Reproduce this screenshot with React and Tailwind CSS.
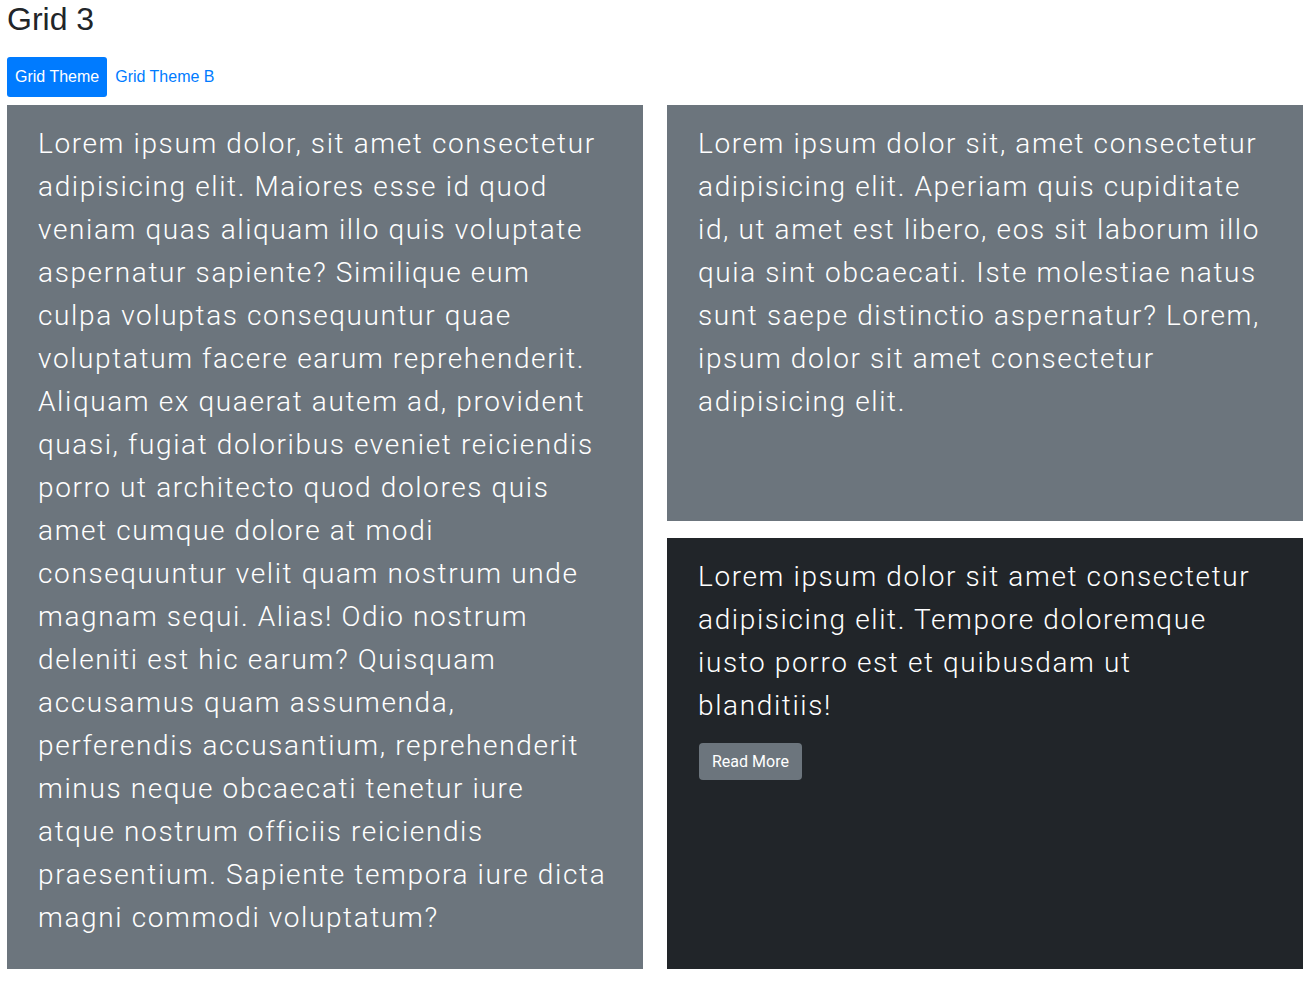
import React from 'react';

const LEFT = [
  'Lorem ipsum dolor, sit amet consectetur',
  'adipisicing elit. Maiores esse id quod',
  'veniam quas aliquam illo quis voluptate',
  'aspernatur sapiente? Similique eum',
  'culpa voluptas consequuntur quae',
  'voluptatum facere earum reprehenderit.',
  'Aliquam ex quaerat autem ad, provident',
  'quasi, fugiat doloribus eveniet reiciendis',
  'porro ut architecto quod dolores quis',
  'amet cumque dolore at modi',
  'consequuntur velit quam nostrum unde',
  'magnam sequi. Alias! Odio nostrum',
  'deleniti est hic earum? Quisquam',
  'accusamus quam assumenda,',
  'perferendis accusantium, reprehenderit',
  'minus neque obcaecati tenetur iure',
  'atque nostrum officiis reiciendis',
  'praesentium. Sapiente tempora iure dicta',
  'magni commodi voluptatum?',
];

const RIGHT_TOP = [
  'Lorem ipsum dolor sit, amet consectetur',
  'adipisicing elit. Aperiam quis cupiditate',
  'id, ut amet est libero, eos sit laborum illo',
  'quia sint obcaecati. Iste molestiae natus',
  'sunt saepe distinctio aspernatur? Lorem,',
  'ipsum dolor sit amet consectetur',
  'adipisicing elit.',
];

const RIGHT_BOTTOM = [
  'Lorem ipsum dolor sit amet consectetur',
  'adipisicing elit. Tempore doloremque',
  'iusto porro est et quibusdam ut',
  'blanditiis!',
];

function Lines({ lines }) {
  return (
    <p className="mb-4 text-[28px] leading-[43px] font-light tracking-[0.058em] text-white">
      {lines.map((line) => (
        <span key={line} className="block whitespace-nowrap">{line}</span>
      ))}
    </p>
  );
}

export default function App() {
  return (
    <div className="bg-white px-[7px] font-['Roboto',sans-serif] text-[#212529]">
      <h1 className="pt-[1px] font-['Liberation_Sans',sans-serif] text-[32px] leading-[36px]">Grid 3</h1>
      <div className="mt-[20px] flex items-center font-['Liberation_Sans',sans-serif] text-[16px]">
        <button type="button" className="h-10 rounded-[3px] bg-[#007bff] px-2 text-white">Grid Theme</button>
        <button type="button" className="h-10 px-2 text-[#007bff]">Grid Theme B</button>
      </div>
      <div className="mt-2 grid grid-cols-[636px_636px] gap-6">
        <div className="h-[864px] bg-[#6c757d] px-[31px] pt-[17px]">
          <Lines lines={LEFT} />
        </div>
        <div className="flex h-[864px] flex-col gap-[17px]">
          <div className="h-[416px] bg-[#6c757d] px-[31px] pt-[17px]">
            <Lines lines={RIGHT_TOP} />
          </div>
          <div className="flex-1 bg-[#212529] px-[31px] pt-[17px]">
            <Lines lines={RIGHT_BOTTOM} />
            <button type="button" className="ml-px h-[37px] rounded-[4px] bg-[#6c757d] px-[13px] font-['Roboto',sans-serif] text-[16px] text-white">
              Read More
            </button>
          </div>
        </div>
      </div>
    </div>
  );
}
